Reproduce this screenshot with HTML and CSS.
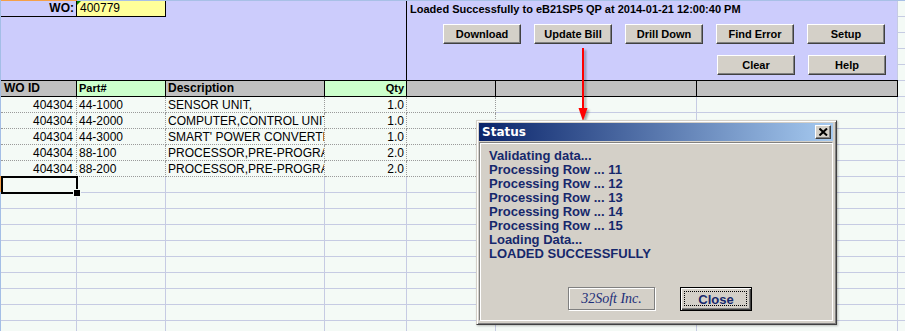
FILE: index.html
```html
<!DOCTYPE html>
<html>
<head>
<meta charset="utf-8">
<title>WO Load</title>
<link rel="stylesheet" href="styles.css">
</head>
<body>
<div class="sheet">
  <div class="topline"><span class="tl-a"></span><span class="tl-rest"></span></div>
  <div class="panel">
    <div class="panel-left">
      <div class="wo-row">
        <div class="wo-label">WO:</div>
        <div class="wo-value"><span class="err-mark"></span>400779</div>
      </div>
    </div>
    <div class="panel-right">
      <div class="status-text">Loaded Successfully to eB21SP5 QP at 2014-01-21 12:00:40 PM</div>
      <div class="btns">
        <div class="btn-row">
          <div class="btn">Download</div>
          <div class="btn">Update Bill</div>
          <div class="btn">Drill Down</div>
          <div class="btn">Find Error</div>
          <div class="btn">Setup</div>
        </div>
        <div class="btn-row end">
          <div class="btn">Clear</div>
          <div class="btn">Help</div>
        </div>
      </div>
    </div>
  </div>
  <div class="hdr">
    <div class="c a">WO ID</div>
    <div class="c b green small">Part#</div>
    <div class="c cc">Description</div>
    <div class="c d green small right">Qty</div>
    <div class="c e"></div>
    <div class="c f"></div>
    <div class="c g"></div>
  </div>
  <div class="row">
    <div class="c a right">404304</div><div class="c b">44-1000</div><div class="c cc">SENSOR UNIT,</div><div class="c d right">1.0</div><div class="c e"></div>
  </div>
  <div class="row">
    <div class="c a right">404304</div><div class="c b">44-2000</div><div class="c cc">COMPUTER,CONTROL UNIT</div><div class="c d right">1.0</div><div class="c e"></div>
  </div>
  <div class="row">
    <div class="c a right">404304</div><div class="c b">44-3000</div><div class="c cc">SMART' POWER CONVERTER</div><div class="c d right">1.0</div><div class="c e"></div>
  </div>
  <div class="row">
    <div class="c a right">404304</div><div class="c b">88-100</div><div class="c cc">PROCESSOR,PRE-PROGRAMMED</div><div class="c d right">2.0</div><div class="c e"></div>
  </div>
  <div class="row">
    <div class="c a right">404304</div><div class="c b">88-200</div><div class="c cc">PROCESSOR,PRE-PROGRAMMED</div><div class="c d right">2.0</div><div class="c e"></div>
  </div>
  <div class="sel-row"><div class="selected"></div></div>

  <svg class="arrow" width="20" height="84" viewBox="0 0 20 84">
    <line x1="9" y1="4" x2="9" y2="68" stroke="#ff0000" stroke-width="2"/>
    <polygon points="4.5,64 13.5,64 9,77" fill="#ff0000"/>
  </svg>

  <div class="dialog">
    <div class="titlebar">
      <span class="title">Status</span>
      <span class="xbtn"><svg width="9" height="8" viewBox="0 0 9 8"><path d="M0.5 0.5 L8 7.5 M8 0.5 L0.5 7.5" stroke="#000" stroke-width="2"/></svg></span>
    </div>
    <div class="dpanel">
      <div class="log">
        <div>Validating data...</div>
        <div>Processing Row ... 11</div>
        <div>Processing Row ... 12</div>
        <div>Processing Row ... 13</div>
        <div>Processing Row ... 14</div>
        <div>Processing Row ... 15</div>
        <div>Loading Data...</div>
        <div>LOADED SUCCESSFULLY</div>
      </div>
      <div class="dbtns">
        <div class="brand">32Soft Inc.</div>
        <div class="close-btn"><span>Close</span></div>
      </div>
    </div>
  </div>
</div>
</body>
</html>
```

FILE: styles.css
```css
* { box-sizing: border-box; }
html, body { margin: 0; padding: 0; }
body {
  width: 905px;
  height: 331px;
  overflow: hidden;
  font-family: "Liberation Sans", Arial, sans-serif;
  font-size: 12px;
  color: #000;
}

.sheet {
  position: relative;
  width: 905px;
  height: 331px;
  overflow: hidden;
  padding-left: 1px;
  background-color: #f4faf6;
  background-image:
    linear-gradient(#a4bee6, #a4bee6),
    linear-gradient(#c6cbe3, #c6cbe3),
    linear-gradient(#c6cbe3, #c6cbe3),
    linear-gradient(#c6cbe3, #c6cbe3),
    linear-gradient(#c6cbe3, #c6cbe3),
    linear-gradient(#c6cbe3, #c6cbe3),
    linear-gradient(#c6cbe3, #c6cbe3),
    linear-gradient(#c6cbe3, #c6cbe3),
    repeating-linear-gradient(to bottom, #c6cbe3 0 1px, transparent 1px 16px);
  background-size: 1px 100%, 1px 100%, 1px 100%, 1px 100%, 1px 100%, 1px 100%, 1px 100%, 1px 100%, 100% 100%;
  background-position: 0 0, 76px 0, 165px 0, 324px 0, 406px 0, 495px 0, 696px 0, 897px 0, 0 0;
  background-repeat: no-repeat;
}

.topline { display: flex; height: 1px; }
.tl-a { width: 76px; background: #f5a048; }
.tl-rest { flex: 1; background: #a8c0e6; }

/* lavender control panel */
.panel {
  display: flex;
  width: 896px;
  height: 79px;
  background: #ccccfc;
}
.panel-left {
  width: 406px;
  border-right: 1px solid #000;
}
.wo-row { display: flex; height: 16px; }
.wo-label {
  width: 76px;
  border-right: 1px solid #000;
  border-bottom: 1px solid #000;
  text-align: right;
  font-weight: bold;
  line-height: 15px;
  padding-right: 2px;
}
.wo-value {
  position: relative;
  width: 89px;
  background: #ffff99;
  border-right: 1px solid #000;
  border-bottom: 1px solid #000;
  line-height: 15px;
  padding-left: 3px;
}
.err-mark {
  position: absolute;
  left: 0;
  top: 0;
  width: 0;
  height: 0;
  border-top: 4px solid #008000;
  border-right: 4px solid transparent;
}

.panel-right { flex: 1; }
.status-text {
  height: 16px;
  line-height: 16px;
  padding-left: 3px;
  font-weight: bold;
  font-size: 11px;
  white-space: nowrap;
}
.btns {
  margin-left: 36px;
  margin-top: 7px;
  width: 443px;
  display: flex;
  flex-direction: column;
  gap: 11px;
}
.btn-row { display: flex; gap: 13px; }
.btn-row.end { justify-content: flex-end; }
.btn {
  width: 78px;
  height: 20px;
  background: #d4d0c8;
  border: 1px solid;
  border-color: #ffffff #404040 #404040 #ffffff;
  box-shadow: inset -1px -1px 0 #808080;
  display: flex;
  align-items: center;
  justify-content: center;
  font-weight: bold;
  font-size: 11px;
  color: #000;
}

/* header row */
.hdr {
  display: flex;
  height: 17px;
  width: 897px;
  background: #c0c0c0;
  border-top: 1px solid #000;
  border-bottom: 1px solid #000;
}
.hdr .c {
  border-right: 1px solid #000;
  font-weight: bold;
  line-height: 15px;
}
.c {
  white-space: nowrap;
  overflow: hidden;
  padding: 0 2px;
}
.c.a { width: 76px; padding-left: 3px; }
.c.b { width: 89px; }
.c.cc { width: 159px; }
.c.d { width: 82px; padding-right: 2px; }
.c.e { width: 89px; }
.c.f { width: 201px; }
.c.g { width: 201px; }
.c.right { text-align: right; }
.c.a.right { padding-right: 3px; }
.hdr .green { background: #ccffcc; }
.hdr .small { font-size: 11px; }

/* data rows */
.row {
  display: flex;
  height: 16px;
}
.row .c {
  background: #f4faf6;
  border-right: 1px dotted #9a9a9a;
  border-bottom: 1px dotted #9a9a9a;
  line-height: 16px;
}

.sel-row {
  position: relative;
  height: 16px;
}
.sel-row::before {
  content: "";
  position: absolute;
  left: -1px;
  top: 0;
  width: 1px;
  height: 16px;
  background: #f5a048;
}
.selected {
  position: relative;
  width: 77px;
  height: 18px;
  margin-top: -1px;
  border: 2px solid #000;
}
.selected::after {
  content: "";
  position: absolute;
  right: -5px;
  bottom: -5px;
  width: 6px;
  height: 6px;
  background: #000;
  border: 1px solid #f4faf6;
}

/* red arrow (annotation overlay) */
.arrow {
  position: absolute;
  left: 574px;
  top: 44px;
  filter: drop-shadow(2px 2px 1px rgba(0, 0, 0, 0.35));
}

/* status dialog (floating window) */
.dialog {
  position: absolute;
  left: 476px;
  top: 120px;
  width: 361px;
  height: 205px;
  background: #d4d0c8;
  border: 1px solid;
  border-color: #d4d0c8 #404040 #404040 #d4d0c8;
  box-shadow: inset 1px 1px 0 #ffffff, inset -1px -1px 0 #808080, 1px 1px 2px rgba(0,0,0,0.25);
  padding: 2px 3px 3px 2px;
  display: flex;
  flex-direction: column;
}
.titlebar {
  height: 18px;
  background: linear-gradient(to right, #0a246a, #a6caf0);
  display: flex;
  align-items: center;
  justify-content: space-between;
  padding: 0 2px 0 3px;
  flex-shrink: 0;
}
.title {
  color: #fff;
  font-family: "DejaVu Sans", "Liberation Sans", sans-serif;
  font-weight: bold;
  font-size: 12px;
}
.xbtn {
  width: 16px;
  height: 14px;
  background: #d4d0c8;
  border: 1px solid;
  border-color: #fff #404040 #404040 #fff;
  box-shadow: inset -1px -1px 0 #808080;
  display: flex;
  align-items: center;
  justify-content: center;
}
.dpanel {
  flex: 1;
  margin-top: 1px;
  border: 1px solid;
  border-color: #808080 #ffffff #ffffff #808080;
  box-shadow: inset 1px 1px 0 #ffffff;
  padding: 6px 8px 9px 9px;
  display: flex;
  flex-direction: column;
}
.log {
  color: #16286c;
  font-weight: bold;
  font-size: 13px;
  line-height: 14px;
}
.dbtns {
  margin-top: auto;
  display: flex;
  justify-content: center;
  gap: 25px;
  padding-left: 7px;
}
.brand {
  width: 87px;
  height: 23px;
  border: 1px solid #808080;
  box-shadow: 1px 1px 0 #ffffff, inset 1px 1px 0 #ffffff;
  display: flex;
  align-items: center;
  justify-content: center;
  font-family: "Liberation Serif", serif;
  font-style: italic;
  font-size: 14px;
  color: #1c2e78;
}
.close-btn {
  position: relative;
  width: 72px;
  height: 24px;
  border: 1px solid #000;
  background: #d4d0c8;
  box-shadow: inset 1px 1px 0 #ffffff, inset -1px -1px 0 #404040, inset -2px -2px 0 #808080;
  display: flex;
  align-items: center;
  justify-content: center;
  color: #16286c;
  font-weight: bold;
  font-size: 13px;
}
.close-btn::after {
  content: "";
  position: absolute;
  left: 3px;
  top: 3px;
  right: 4px;
  bottom: 4px;
  border: 1px dotted #000;
}
```
